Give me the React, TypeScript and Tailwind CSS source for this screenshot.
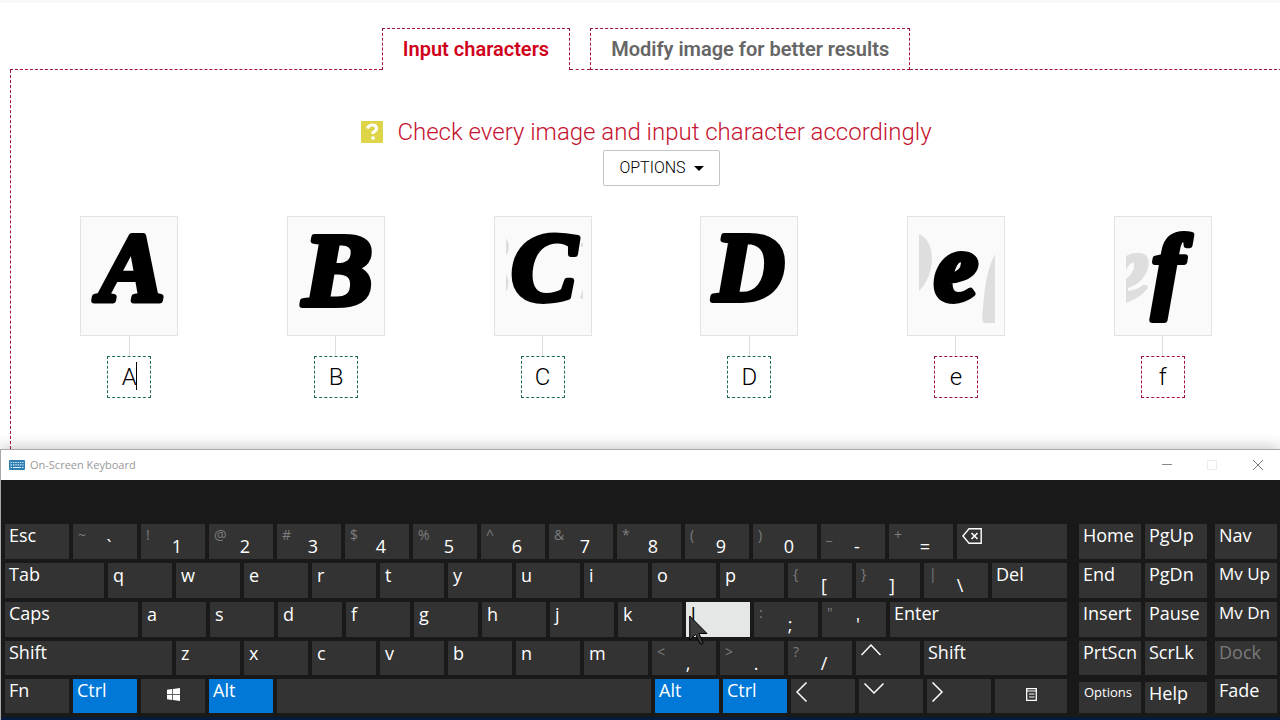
import type { ReactNode } from "react";

type KeyDef = {
  id: string;
  size: string;
  label?: string;
  shift?: string;
  icon?: ReactNode;
  tone?: "active" | "pressed" | "muted";
  text?: string;
};

type KeyRow = { height: string; keys: KeyDef[] };

const U = "flex-[64]";
const LABEL = "pl-1 text-lg leading-[22px]";
const LETTER = "pl-[5px] text-lg leading-6";

const single = (chars: string): KeyDef[] =>
  chars.split("").map((c) => ({ id: c, size: U, label: c, text: LETTER }));

const dual = (pairs: [string, string][]): KeyDef[] =>
  pairs.map(([shift, label]) => ({ id: label, size: U, shift, label }));

const Stroke = ({ d, name, className }: { d: string; name: string; className: string }) => (
  <svg
    aria-label={name}
    viewBox="0 0 20 20"
    className={`ml-[5px] size-5 fill-none stroke-white ${className}`}
    strokeWidth="1.5"
  >
    <path d={d} />
  </svg>
);

const Backspace = (
  <svg
    aria-label="Backspace"
    viewBox="0 0 20 16"
    className="mt-1 ml-[5px] h-4 w-5 fill-none stroke-white"
    strokeWidth="1.4"
  >
    <path d="M7 .8H19.2V15.2H7L.9 8Z" />
    <path d="M9.5 5l6 6M15.5 5l-6 6" strokeWidth="1.6" />
  </svg>
);

const WindowsLogo = (
  <svg aria-label="Windows" viewBox="0 0 13 13" className="mx-auto mt-[9px] size-[13px] fill-white">
    <path d="M0 1.8 5.3 1v5.1H0zM6 .9 13 0v6.1H6zM0 6.8h5.3V12L0 11.2zM6 6.8h7V13l-7-.9z" />
  </svg>
);

const MenuIcon = (
  <svg aria-label="Menu" viewBox="0 0 11 13" className="mx-auto mt-[9px] h-[13px] w-[11px] fill-none stroke-white">
    <path d="M.7.7h9.6v11.6H.7z" strokeWidth="1.3" />
    <path d="M0 3h11M3 6h5.5M3 9h5.5" strokeWidth="1.2" />
  </svg>
);

const rows: KeyRow[] = [
  {
    height: "h-[35px]",
    keys: [
      { id: "esc", size: U, label: "Esc" },
      ...dual([
        ["~", "`"], ["!", "1"], ["@", "2"], ["#", "3"], ["$", "4"], ["%", "5"], ["^", "6"],
        ["&", "7"], ["*", "8"], ["(", "9"], [")", "0"], ["_", "-"], ["+", "="],
      ]),
      { id: "bksp", size: "flex-[110]", icon: Backspace },
    ],
  },
  {
    height: "h-[35px]",
    keys: [
      { id: "tab", size: "flex-[99]", label: "Tab" },
      ...single("qwertyuiop"),
      ...dual([["{", "["], ["}", "]"], ["|", "\\"]]),
      { id: "del", size: "flex-[75]", label: "Del" },
    ],
  },
  {
    height: "h-[35px]",
    keys: [
      { id: "caps", size: "flex-[133]", label: "Caps" },
      ...single("asdfghjk"),
      { id: "l", size: U, label: "l", tone: "pressed", text: LETTER },
      ...dual([[":", ";"], ['"', "'"]]),
      { id: "enter", size: "flex-[177]", label: "Enter" },
    ],
  },
  {
    height: "h-[34px]",
    keys: [
      { id: "lshift", size: "flex-[167]", label: "Shift" },
      ...single("zxcvbnm"),
      ...dual([["<", ","], [">", "."], ["?", "/"]]),
      { id: "up", size: U, icon: <Stroke name="Up" className="mt-px" d="M.5 13 10 3l9.500 10" /> },
      { id: "rshift", size: "flex-[143]", label: "Shift" },
    ],
  },
  {
    height: "h-[34px]",
    keys: [
      { id: "fn", size: U, label: "Fn" },
      { id: "lctrl", size: U, label: "Ctrl", tone: "active" },
      { id: "win", size: U, icon: WindowsLogo },
      { id: "lalt", size: U, label: "Alt", tone: "active" },
      { id: "space", size: "flex-[374]", label: "" },
      { id: "ralt", size: U, label: "Alt", tone: "active" },
      { id: "rctrl", size: U, label: "Ctrl", tone: "active" },
      { id: "left", size: U, icon: <Stroke name="Left" className="mt-[3px]" d="M10.500 .5 1 10l9.500 9.500" /> },
      { id: "down", size: U, icon: <Stroke name="Down" className="mt-px" d="M.5 3.500 10 13l9.500-9.500" /> },
      { id: "right", size: U, icon: <Stroke name="Right" className="mt-[3px]" d="M.5 .5 10 10 .5 19.500" /> },
      { id: "menu", size: "flex-[72]", icon: MenuIcon },
    ],
  },
];

const navRows: KeyRow[] = [
  ["Home", "PgUp"], ["End", "PgDn"], ["Insert", "Pause"], ["PrtScn", "ScrLk"], ["Options", "Help"],
].map((pair, i) => ({
  height: i < 3 ? "h-[35px]" : i === 3 ? "h-[34px]" : "h-[34px] pt-[3px]",
  keys: pair.map((label) => ({
    id: label,
    size: "flex-1",
    label,
    text: label === "Options" ? "pl-[5px] text-[13px] leading-5" : undefined,
  })),
}));

const sideRows: KeyRow[] = ["Nav", "Mv Up", "Mv Dn", "Dock", "Fade"].map((label, i) => ({
  height: i < 3 ? "h-[35px]" : "h-[34px]",
  keys: [
    {
      id: label,
      size: "flex-1",
      label,
      tone: label === "Dock" ? ("muted" as const) : undefined,
      text: label.startsWith("Mv") ? "pl-1 text-[17px] leading-[22px]" : undefined,
    },
  ],
}));

const tones = {
  normal: "bg-[#333333] text-white",
  active: "bg-[#0078d7] text-white",
  pressed: "bg-[#e5e7e6] text-black",
  muted: "bg-[#333333] text-[#7a7a7a]",
};

function Key({ def }: { def: KeyDef }) {
  return (
    <button
      type="button"
      aria-label={def.id}
      className={`relative flex h-full min-w-0 items-start text-left whitespace-nowrap ${def.size} ${tones[def.tone ?? "normal"]}`}
    >
      {def.shift ? (
        <>
          <span className="w-7 pl-[5px] text-sm leading-[22px] text-[#7d7d7d]">{def.shift}</span>
          <span className="mt-[10px] w-4 text-center text-lg leading-6">{def.label}</span>
        </>
      ) : (
        def.icon ?? <span className={def.text ?? LABEL}>{def.label}</span>
      )}
      {def.tone === "pressed" && (
        <svg viewBox="0 0 20 32" className="absolute top-[13px] left-[3px] z-10 h-8 w-5 fill-[#3c3c3c] stroke-black">
          <path d="M.7 1v24l6-5.500 4.500 9.500q1.500 1 3-.6L10 18.500h8z" />
        </svg>
      )}
    </button>
  );
}

function KeyBlock({ rows, size }: { rows: KeyRow[]; size: string }) {
  return (
    <div className={`flex min-w-0 flex-col gap-1 ${size}`}>
      {rows.map((row, i) => (
        <div key={i} className={`flex gap-1 ${row.height}`}>
          {row.keys.map((k) => (
            <Key key={k.id} def={k} />
          ))}
        </div>
      ))}
    </div>
  );
}

type SampleDef = { char: string; x: number; y: number; size: number; ok: boolean; ghost?: ReactNode };

const samples: SampleDef[] = [
  { char: "A", x: 51, y: 83, size: 98, ok: true },
  { char: "B", x: 50, y: 88, size: 104, ok: true },
  {
    char: "C", x: 49, y: 83, size: 98, ok: true,
    ghost: <path d="M11 21q6 9 0 18zM11 57q5 9 0 18zM86 26h2v4h-2zM88 72v10l-3-1z" />,
  },
  { char: "D", x: 48, y: 83, size: 98, ok: true },
  {
    char: "e", x: 48, y: 83, size: 98, ok: false,
    ghost: <path d="M11 17Q24 23 24 43 23 62 11 74zM87 37v69H76q-3-2-1-15 2-35 12-54z" />,
  },
  {
    char: "f", x: 53, y: 83, size: 94, ok: false,
    ghost: (
      <path d="M11 39Q22 33 31 38 37 46 30 58 25 67 13 71V74Q22 73 28 68 33 67 33 71 25 81 11 86V62Q20 55 19 46 16 44 11 53z" />
    ),
  },
];

function Sample({ s, focused }: { s: SampleDef; focused: boolean }) {
  return (
    <div className="flex flex-col items-center">
      <svg
        role="img"
        aria-label={`Glyph ${s.char}`}
        viewBox="0 0 96 118"
        className="h-[120px] w-[98px] overflow-visible border border-[#e3e3e3] bg-[#fafafa] font-['Liberation_Serif',serif] font-bold italic"
      >
        <g className="fill-[#dedede]">{s.ghost}</g>
        <text
          x={s.x}
          y={s.y}
          textAnchor="middle"
          fontSize={s.size}
          strokeLinejoin="round"
          className="fill-black stroke-black stroke-[6px]"
        >
          {s.char}
        </text>
      </svg>
      <div className="h-5 w-px bg-[#dddddd]" />
      <div className="relative">
        <input
          aria-label={`Character for glyph ${s.char}`}
          defaultValue={s.char}
          maxLength={1}
          className={`block h-[42px] w-11 border border-dashed bg-white text-center text-2xl font-light text-black outline-none ${s.ok ? "border-[#1f6f4d]" : "border-[#a01438]"}`}
        />
        {focused && <span className="absolute top-[6px] left-[29px] h-7 w-px bg-black" />}
      </div>
    </div>
  );
}

const dash = "border-dashed border-[#a01438]";

export default function App() {
  return (
    <div className="flex min-h-screen flex-col overflow-hidden bg-white font-[Roboto,sans-serif]">
      <main className="flex flex-1 flex-col border-t-[3px] border-[#f8f8f8] pt-[25px]">
        <nav className="-mr-0.5 ml-[10px] flex h-[42px] shrink-0 text-xl font-semibold">
          <div className={`flex-1 border-b ${dash}`} />
          <button type="button" className={`border-x border-t px-5 pb-px text-[#d0021b] ${dash}`}>
            Input characters
          </button>
          <div className={`w-5 border-b ${dash}`} />
          <button type="button" className={`border px-5 text-[#666666] ${dash}`}>
            Modify image for better results
          </button>
          <div className={`flex-1 border-b ${dash}`} />
        </nav>
        <section className={`-mr-0.5 ml-[10px] flex-1 border-l pb-[50px] ${dash}`}>
          <div className="flex flex-col items-center pt-[46px]">
            <h1 className="flex h-8 items-center gap-[14px] text-2xl font-light text-[#c4122f]">
              <svg viewBox="0 0 22 22" className="size-[22px]" aria-label="Help">
                <rect width="22" height="22" rx="1" className="fill-[#ddd447]" />
                <path d="M6.500 7.500Q7.500 4 11.500 4T15.500 7.500Q15.500 9.500 12 11.500V13" className="fill-none stroke-white" strokeWidth="3" />
                <path d="M10.300 15.500h3.400v3h-3.400z" className="fill-white" />
              </svg>
              Check every image and input character accordingly
            </h1>
            <button
              type="button"
              className="mt-0.5 ml-[30px] flex h-9 items-center gap-2 rounded-xs border border-[#c4c4c4] px-[15px] text-base font-light text-black"
            >
              OPTIONS
              <svg viewBox="0 0 10 5" className="h-[5px] w-[10px]">
                <path d="M0 0h10L5 5z" />
              </svg>
            </button>
          </div>
          <div className="mt-[30px] mr-4 ml-[15px] grid grid-cols-6">
            {samples.map((s, i) => (
              <Sample key={s.char} s={s} focused={i === 0} />
            ))}
          </div>
        </section>
      </main>

      <section
        aria-label="On-Screen Keyboard"
        className="shrink-0 border-t border-l border-[#a8a8a8] bg-[#191919] font-['Open_Sans',sans-serif] shadow-[0_-2px_14px_rgba(0,0,0,0.22)]"
      >
        <header className="flex h-[30px] items-center bg-white pr-4 pl-2 text-[#999999]">
          <svg viewBox="0 0 16 10" className="mr-[5px] h-[10px] w-4" aria-hidden="true">
            <rect width="16" height="10" rx="1" className="fill-[#2f7fb5]" />
            <path d="M1.500 2.500h13M1.500 4.900h13" strokeDasharray="1.400 1" className="stroke-[#d8ecf8]" strokeWidth="1.200" />
            <path d="M1.500 7.500h1.500M4 7.500h8M13 7.500h1.500" className="stroke-[#d8ecf8]" strokeWidth="1.200" />
          </svg>
          <h2 className="flex-1 text-[11px]">On-Screen Keyboard</h2>
          <div className="flex items-center gap-[35px]">
            <button type="button" aria-label="Minimize">
              <svg viewBox="0 0 10 10" className="size-[10px] fill-none stroke-[#888888]"><path d="M0 4.500h10" /></svg>
            </button>
            <button type="button" aria-label="Maximize" disabled>
              <svg viewBox="0 0 10 10" className="size-[10px] fill-none stroke-[#ececec]"><path d="M.5 .5h9v9h-9z" /></svg>
            </button>
            <button type="button" aria-label="Close">
              <svg viewBox="0 0 12 12" className="size-3 fill-none stroke-[#777777]"><path d="M1 1l10 10M11 1 1 11" /></svg>
            </button>
          </div>
        </header>
        <div className="flex pt-11 pr-[3px] pb-1 pl-1">
          <KeyBlock rows={rows} size="flex-[1062]" />
          <div className="ml-3 flex flex-[198] gap-2">
            <KeyBlock rows={navRows} size="flex-[128]" />
            <KeyBlock rows={sideRows} size="flex-[62]" />
          </div>
        </div>
        <div className="h-[3px] bg-[#061c3c]" />
      </section>
    </div>
  );
}
